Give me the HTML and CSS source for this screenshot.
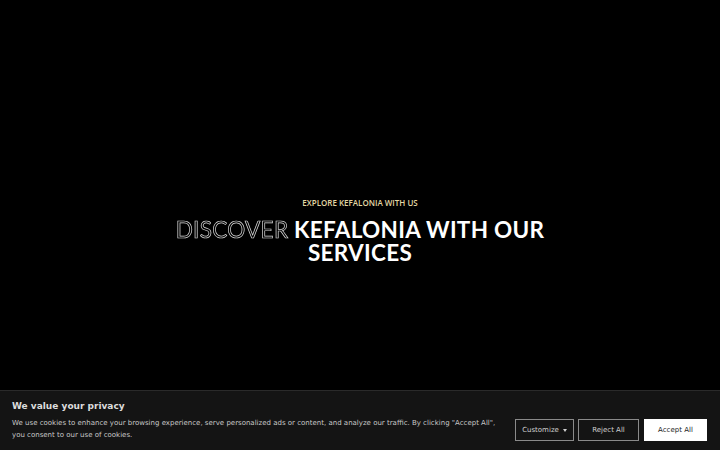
FILE: index.html
```html
<!DOCTYPE html>
<html lang="en">
<head>
<meta charset="utf-8">
<title>Discover Kefalonia</title>
<link rel="stylesheet" href="styles.css">
</head>
<body>
<main class="hero">
  <div class="hero-inner">
    <p class="eyebrow">EXPLORE KEFALONIA WITH US</p>
    <h1 class="title"><span class="outline">DISCOVER</span> KEFALONIA WITH OUR<br>SERVICES</h1>
  </div>
</main>
<div class="cookie">
  <div class="cookie-text">
    <p class="cookie-title">We value your privacy</p>
    <p class="cookie-body">We use cookies to enhance your browsing experience, serve personalized ads or content, and analyze our traffic. By clicking "Accept All", you consent to our use of cookies.</p>
  </div>
  <div class="cookie-actions">
    <button class="btn btn-ghost btn-custom">Customize <span class="caret"></span></button>
    <button class="btn btn-ghost btn-reject">Reject All</button>
    <button class="btn btn-solid btn-accept">Accept All</button>
  </div>
</div>
</body>
</html>
```
FILE: styles.css
```css
html, body {
  margin: 0;
  padding: 0;
  background: #000;
}
body {
  width: 720px;
  height: 450px;
  overflow: hidden;
}
.hero {
  height: 450px;
  display: flex;
  align-items: center;
  justify-content: center;
}
.hero-inner {
  text-align: center;
  margin-top: 10px;
}
.eyebrow {
  margin: 0 0 10px;
  font-family: "Open Sans", sans-serif;
  font-weight: 600;
  font-size: 8px;
  color: #e3d7a4;
}
.title {
  margin: 0;
  font-family: "Lato", sans-serif;
  font-weight: 700;
  font-size: 22.5px;
  line-height: 23px;
  color: #fff;
  letter-spacing: 0.3px;
}
.outline {
  display: inline-block;
  color: #000;
  -webkit-text-stroke: 0.7px #d8d8d8;
  font-weight: 400;
  filter: grayscale(1);
}
.cookie {
  position: fixed;
  left: 0;
  right: 0;
  bottom: 0;
  height: 59px;
  background: #141414;
  border-top: 1px solid #2a2a2a;
  display: flex;
  align-items: flex-start;
  justify-content: space-between;
  padding: 0 13px 0 12px;
  font-family: "DejaVu Sans", sans-serif;
}
.cookie-title {
  margin: 10px 0 0;
  font-size: 9px;
  font-weight: 700;
  color: #dcdcdc;
}
.cookie-body {
  margin: 6px 0 0;
  width: 490px;
  font-size: 7px;
  line-height: 12px;
  color: #c8c8c8;
}
.cookie-actions {
  display: flex;
  gap: 4px;
  margin-top: 28px;
}
.btn {
  height: 22px;
  font-family: "DejaVu Sans", sans-serif;
  font-size: 7px;
  padding: 0;
  box-sizing: border-box;
  display: flex;
  align-items: center;
  justify-content: center;
  gap: 4px;
}
.btn-ghost {
  background: transparent;
  border: 1.5px solid #8a8a8a;
  color: #d0d0d0;
}
.btn-custom { width: 59px; }
.btn-reject { width: 61px; }
.btn-accept { width: 63px; margin-left: 1px; }
.btn-solid {
  background: #fff;
  border: 1.5px solid #fff;
  color: #222;
}
.caret {
  width: 0;
  height: 0;
  border-left: 2.5px solid transparent;
  border-right: 2.5px solid transparent;
  border-top: 3px solid #d0d0d0;
}
```
